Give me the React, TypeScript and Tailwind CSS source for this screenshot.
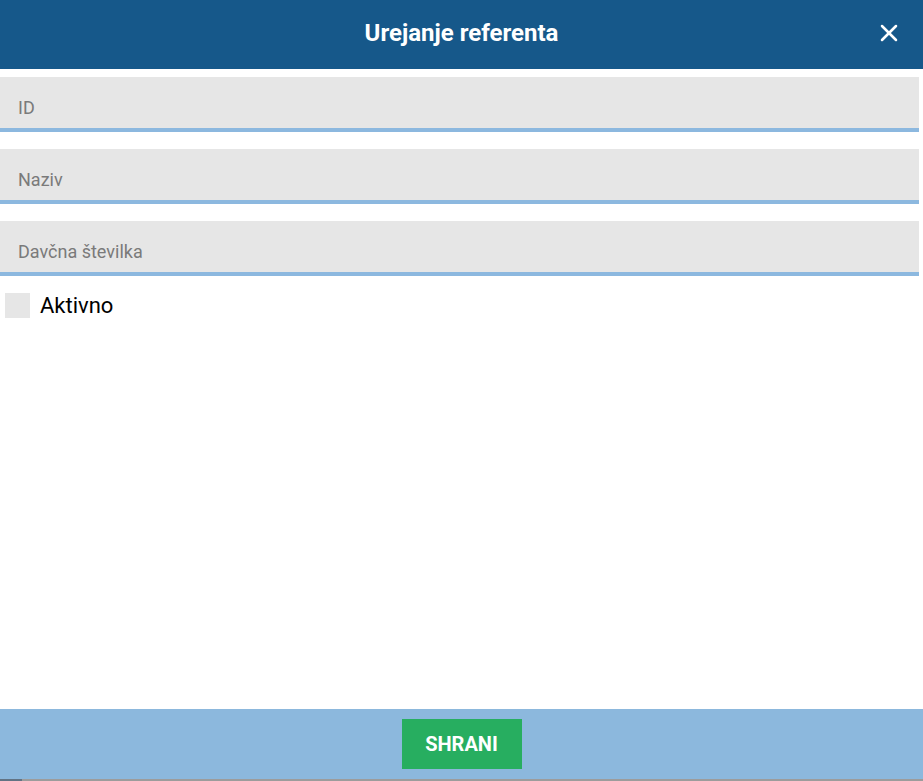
import { X } from 'lucide-react'

const FIELDS = ['ID', 'Naziv', 'Davčna številka']

function Field({ label }: { label: string }) {
  return (
    <div className="mr-[4px] h-[55px] border-b-[4px] border-[#8cb8df] bg-[#e6e6e6] pl-[18px] pt-[20px]">
      <span className="text-[18px] leading-[22px] text-[#7a7a7a]">{label}</span>
    </div>
  )
}

export default function App() {
  return (
    <div className="flex h-[781px] w-[923px] flex-col bg-white font-['Roboto',sans-serif]">
      <header className="relative flex h-[69px] shrink-0 items-center justify-center bg-[#16588a]">
        <h1 className="-mt-[3px] text-[24px] font-bold text-white">Urejanje referenta</h1>
        <button className="absolute right-[20px] top-[19px] text-white">
          <X size={28} strokeWidth={2.2} />
        </button>
      </header>

      <div className="flex flex-col gap-[17px] pt-[8px]">
        {FIELDS.map((f) => (
          <Field key={f} label={f} />
        ))}
      </div>

      <label className="mt-[16px] flex items-center gap-[10px] pl-[5px]">
        <span className="h-[25px] w-[25px] bg-[#e6e6e6]" />
        <span className="pt-[1px] text-[22px] leading-[25px] text-black">Aktivno</span>
      </label>

      <div className="flex-1" />

      <footer className="flex h-[70px] shrink-0 items-center justify-center bg-[#8cb8dd]">
        <button className="h-[50px] w-[120px] bg-[#27ae60] text-[20px] font-bold text-white">
          SHRANI
        </button>
      </footer>
      <div className="flex h-[2px] shrink-0">
        <div className="w-[22px] bg-[#627384]" />
        <div className="flex-1 bg-[#9c9c9c]" />
      </div>
    </div>
  )
}
